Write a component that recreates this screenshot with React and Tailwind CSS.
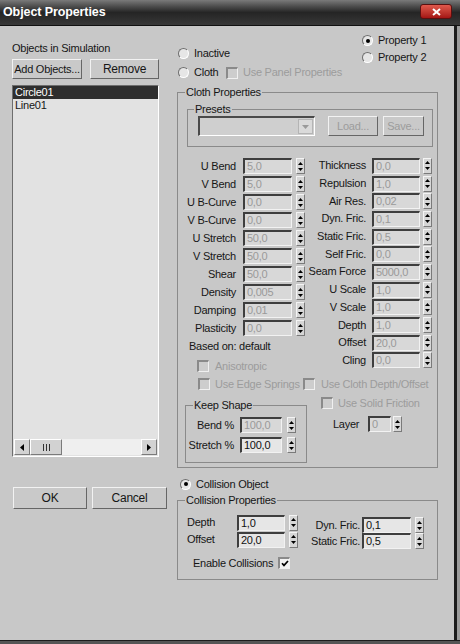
import React from "react";

const leftParams = [
  ["U Bend", "5,0"],
  ["V Bend", "5,0"],
  ["U B-Curve", "0,0"],
  ["V B-Curve", "0,0"],
  ["U Stretch", "50,0"],
  ["V Stretch", "50,0"],
  ["Shear", "50,0"],
  ["Density", "0,005"],
  ["Damping", "0,01"],
  ["Plasticity", "0,0"],
];

const rightParams = [
  ["Thickness", "0,0"],
  ["Repulsion", "1,0"],
  ["Air Res.", "0,02"],
  ["Dyn. Fric.", "0,1"],
  ["Static Fric.", "0,5"],
  ["Self Fric.", "0,0"],
  ["Seam Force", "5000,0"],
  ["U Scale", "1,0"],
  ["V Scale", "1,0"],
  ["Depth", "1,0"],
  ["Offset", "20,0"],
  ["Cling", "0,0"],
];

const Btn = ({ w, h = "h-[20px]", dis, children }) => (
  <div
    className={`${w} ${h} shrink-0 flex items-center justify-center whitespace-nowrap bg-[#c9c9c9] border border-t-[#f2f2f2] border-l-[#f2f2f2] border-b-[#666666] border-r-[#666666] ${
      dis ? "text-[#9c9c9c]" : ""
    }`}
  >
    {children}
  </div>
);

const Spin = ({ cls = "" }) => (
  <div
    className={`${cls} w-[9px] h-[16px] shrink-0 flex flex-col items-center justify-center gap-[3px] bg-[#d6d6d6] border border-t-[#f4f4f4] border-l-[#f4f4f4] border-b-[#7a7a7a] border-r-[#7a7a7a]`}
  >
    <svg width="5" height="3" viewBox="0 0 5 3">
      <path d="M2.5 0L5 3H0z" fill="#000" />
    </svg>
    <svg width="5" height="3" viewBox="0 0 5 3">
      <path d="M0 0h5L2.5 3z" fill="#000" />
    </svg>
  </div>
);

const Field = ({ v, w, on, cls = "" }) => (
  <div
    className={`${cls} ${w} h-[16px] shrink-0 pl-[2px] leading-[13px] border-t-2 border-l-2 border-t-[#3e3e3e] border-l-[#3e3e3e] border-b border-r border-b-[#f2f2f2] border-r-[#f2f2f2] ${
      on ? "bg-[#e6e6e6] text-[#111111]" : "bg-[#d8d8d8] text-[#9a9a9a]"
    }`}
  >
    {v}
  </div>
);

const Radio = ({ on }) => (
  <span className="w-[11px] h-[11px] shrink-0 rounded-full bg-[#e6e6e6] border border-t-[#6e6e6e] border-l-[#6e6e6e] border-b-white border-r-white flex items-center justify-center">
    {on && <span className="w-[4px] h-[4px] rounded-full bg-black" />}
  </span>
);

const Check = ({ on }) => (
  <span
    className={`w-[12px] h-[12px] shrink-0 flex items-center justify-center border-t-2 border-l-2 border-b border-r border-t-[#8a8a8a] border-l-[#8a8a8a] border-b-[#f0f0f0] border-r-[#f0f0f0] ${
      on ? "bg-[#f2f2f2] border-t-[#3a3a3a] border-l-[#3a3a3a]" : "bg-[#cdcdcd]"
    }`}
  >
    {on && (
      <svg width="8" height="7" viewBox="0 0 8 7">
        <path d="M1 3.2l2 2.2L7 1" stroke="#000" strokeWidth="1.7" fill="none" />
      </svg>
    )}
  </span>
);

const Group = ({ title, cls, lcls = "ml-[7px]", children }) => (
  <fieldset className={`border border-[#8a8a8a] ${cls}`}>
    <legend className={`${lcls} px-[1px] leading-[13px]`}>{title}</legend>
    {children}
  </fieldset>
);

const ScrollBtn = ({ right }) => (
  <div className="w-[16px] h-full shrink-0 flex items-center justify-center bg-[#d2d2d2] border border-t-white border-l-white border-b-[#7a7a7a] border-r-[#7a7a7a]">
    <svg width="4" height="7" viewBox="0 0 4 7">
      <path d={right ? "M0 0L4 3.5L0 7z" : "M4 0L0 3.5L4 7z"} fill="#000" />
    </svg>
  </div>
);

export default function App() {
  return (
    <div className="w-[460px] h-[644px] overflow-hidden bg-[#c8c8c8] flex flex-col font-['Liberation_Sans',Arial,sans-serif] text-[11px] leading-[13px] tracking-[-0.25px] text-[#161616]">
      {/* Title bar */}
      <div className="h-[26px] shrink-0 flex items-start justify-between pl-[3px] pr-[8px] bg-linear-to-b from-[#7a7a7a] via-[#252525] to-[#383838] border-b border-[#111111]">
        <span className="mt-[5px] text-white font-bold text-[12.5px] leading-[15px] tracking-[-0.1px]">
          Object Properties
        </span>
        <div className="mt-[4px] w-[32px] h-[15px] rounded-[3px] bg-linear-to-b from-[#e0584c] to-[#a51414] border border-[#5a1010] flex items-center justify-center">
          <svg width="9" height="8" viewBox="0 0 9 8">
            <path d="M1 1l7 6M8 1L1 7" stroke="#fff" strokeWidth="2" />
          </svg>
        </div>
      </div>

      {/* Body */}
      <div className="flex flex-1">
        <div className="flex flex-1">
          {/* Left: objects list */}
          <div className="w-[177px] shrink-0 pl-[12px] pt-[16px] flex flex-col">
            <div>Objects in Simulation</div>
            <div className="flex gap-[8px] mt-[4px]">
              <Btn w="w-[70px]">Add Objects...</Btn>
              <Btn w="w-[69px]">
                <span className="text-[12px]">Remove</span>
              </Btn>
            </div>
            <div className="mt-[6px] w-[147px] h-[372px] bg-[#e2e2e2] border border-[#6e6e6e] border-b-white border-r-white flex flex-col">
              <div className="flex-1">
                <div className="h-[13px] bg-[#2e2e2e] text-white pl-[2px]">Circle01</div>
                <div className="h-[13px] pl-[2px]">Line01</div>
              </div>
              <div className="h-[16px] mx-[1px] mb-[1px] flex bg-[#efefef]">
                <ScrollBtn />
                <div className="w-[32px] h-full flex items-center justify-center gap-[2px] bg-[#d2d2d2] border border-t-white border-l-white border-b-[#7a7a7a] border-r-[#7a7a7a]">
                  <span className="w-[1px] h-[7px] bg-[#333333]" />
                  <span className="w-[1px] h-[7px] bg-[#333333]" />
                  <span className="w-[1px] h-[7px] bg-[#333333]" />
                </div>
                <div className="flex-1" />
                <ScrollBtn right />
              </div>
            </div>
            <div className="flex gap-[5px] mt-[30px] ml-[1px] text-[12px]">
              <Btn w="w-[74px]" h="h-[22px]">OK</Btn>
              <Btn w="w-[75px]" h="h-[22px]">Cancel</Btn>
            </div>
          </div>

          {/* Right: properties */}
          <div className="w-[261px] shrink-0 flex flex-col">
            <div className="h-[60px] flex">
              <div className="w-[185px] pt-[18px]">
                <div className="h-[19px] flex items-center gap-[5px] pl-[1px]">
                  <Radio />
                  <span>Inactive</span>
                </div>
                <div className="h-[19px] flex items-center pl-[1px]">
                  <Radio />
                  <span className="ml-[5px] w-[32px]">Cloth</span>
                  <Check />
                  <span className="ml-[5px] text-[#9c9c9c]">Use Panel Properties</span>
                </div>
              </div>
              <div className="pt-[6px]">
                <div className="h-[17px] flex items-center gap-[5px]">
                  <Radio on />
                  <span>Property 1</span>
                </div>
                <div className="h-[17px] flex items-center gap-[5px]">
                  <Radio />
                  <span>Property 2</span>
                </div>
              </div>
            </div>

            {/* Cloth Properties */}
            <Group title="Cloth Properties" cls="w-[261px] pb-[4px]">
              <Group title="Presets" cls="ml-[9px] mt-[4px] w-[246px] pb-[10px]" lcls="ml-[6px]">
                <div className="flex items-center pl-[10px]">
                  <div className="w-[117px] h-[20px] flex items-center justify-end pr-[1px] bg-[#cfcfcf] border-t-2 border-l-2 border-t-[#4a4a4a] border-l-[#4a4a4a] border-b border-r border-b-white border-r-white">
                    <div className="w-[15px] h-[15px] flex items-center justify-center bg-[#dadada] border border-[#b4b4b4]">
                      <svg width="7" height="4" viewBox="0 0 7 4">
                        <path d="M0 0h7L3.5 4z" fill="#9a9a9a" />
                      </svg>
                    </div>
                  </div>
                  <div className="ml-[13px]">
                    <Btn w="w-[50px]" dis>Load...</Btn>
                  </div>
                  <div className="ml-[5px]">
                    <Btn w="w-[41px]" dis>Save...</Btn>
                  </div>
                </div>
              </Group>

              <div className="flex mt-[10px]">
                <div className="w-[127px] shrink-0">
                  {leftParams.map(([l, v]) => (
                    <div key={l} className="h-[18px] flex items-center">
                      <span className="w-[58px] text-right whitespace-nowrap">{l}</span>
                      <Field v={v} w="w-[49px]" cls="ml-[7px]" />
                      <Spin cls="ml-[4px]" />
                    </div>
                  ))}
                  <div className="h-[18px] flex items-center pl-[11px]">Based on: default</div>
                  <div className="mt-[2px] h-[18px] flex items-center gap-[6px] pl-[19px] text-[#9c9c9c]">
                    <Check />
                    <span>Anisotropic</span>
                  </div>
                </div>
                <div>
                  {rightParams.map(([l, v]) => (
                    <div key={l} className="h-[17.7px] flex items-center">
                      <span className="w-[61px] text-right whitespace-nowrap">{l}</span>
                      <Field v={v} w="w-[48px]" cls="ml-[6px]" />
                      <Spin cls="ml-[3px]" />
                    </div>
                  ))}
                </div>
              </div>

              <div className="h-[18px] flex items-center pl-[20px] text-[#9c9c9c] whitespace-nowrap">
                <div className="w-[105px] flex items-center gap-[5px]">
                  <Check />
                  <span>Use Edge Springs</span>
                </div>
                <Check />
                <span className="ml-[6px]">Use Cloth Depth/Offset</span>
              </div>

              <div className="flex">
                <Group title="Keep Shape" cls="ml-[7px] mt-[6px] w-[122px] pb-[8px]">
                  <div className="mt-[4px] h-[18px] flex items-center">
                    <span className="w-[48px] text-right">Bend %</span>
                    <Field v="100,0" w="w-[42px]" cls="ml-[6px]" />
                    <Spin cls="ml-[5px]" />
                  </div>
                  <div className="mt-[2px] h-[18px] flex items-center">
                    <span className="w-[48px] text-right whitespace-nowrap">Stretch %</span>
                    <Field v="100,0" w="w-[42px]" cls="ml-[6px]" on />
                    <Spin cls="ml-[5px]" />
                  </div>
                </Group>
                <div className="ml-[14px] pt-[1px]">
                  <div className="h-[18px] flex items-center gap-[5px] text-[#9c9c9c]">
                    <Check />
                    <span>Use Solid Friction</span>
                  </div>
                  <div className="mt-[3px] h-[18px] flex items-center pl-[12px]">
                    <span className="w-[35px]">Layer</span>
                    <Field v="0" w="w-[23px]" />
                    <Spin cls="ml-[2px]" />
                  </div>
                </div>
              </div>
            </Group>

            <div className="mt-[7px] h-[18px] flex items-center gap-[5px] pl-[3px]">
              <Radio on />
              <span>Collision Object</span>
            </div>

            {/* Collision Properties */}
            <Group title="Collision Properties" cls="mt-[1px] w-[261px] pb-[7px]">
              <div className="flex mt-[7px]">
                <div className="w-[120px] shrink-0">
                  <div className="h-[17px] flex items-center">
                    <span className="w-[59px] pl-[9px]">Depth</span>
                    <Field v="1,0" w="w-[48px]" on />
                    <Spin cls="ml-[4px]" />
                  </div>
                  <div className="h-[17px] flex items-center">
                    <span className="w-[59px] pl-[9px]">Offset</span>
                    <Field v="20,0" w="w-[48px]" on />
                    <Spin cls="ml-[4px]" />
                  </div>
                </div>
                <div className="pt-[3px]">
                  <div className="h-[16px] flex items-center">
                    <span className="w-[62px] text-right whitespace-nowrap">Dyn. Fric.</span>
                    <Field v="0,1" w="w-[49px]" cls="ml-[2px]" on />
                    <Spin cls="ml-[4px]" />
                  </div>
                  <div className="h-[16px] flex items-center">
                    <span className="w-[62px] text-right whitespace-nowrap">Static Fric.</span>
                    <Field v="0,5" w="w-[49px]" cls="ml-[2px]" on />
                    <Spin cls="ml-[4px]" />
                  </div>
                </div>
              </div>
              <div className="mt-[5px] h-[18px] flex items-center gap-[5px] pl-[15px]">
                <span>Enable Collisions</span>
                <Check on />
              </div>
            </Group>
          </div>
        </div>
        <div className="w-[3px] bg-[#1c1c1c]" />
        <div className="w-[3px] bg-[#9c9c9c]" />
      </div>
      <div className="h-[4px] shrink-0 border-t border-[#1c1c1c] bg-[#555555]" />
    </div>
  );
}
